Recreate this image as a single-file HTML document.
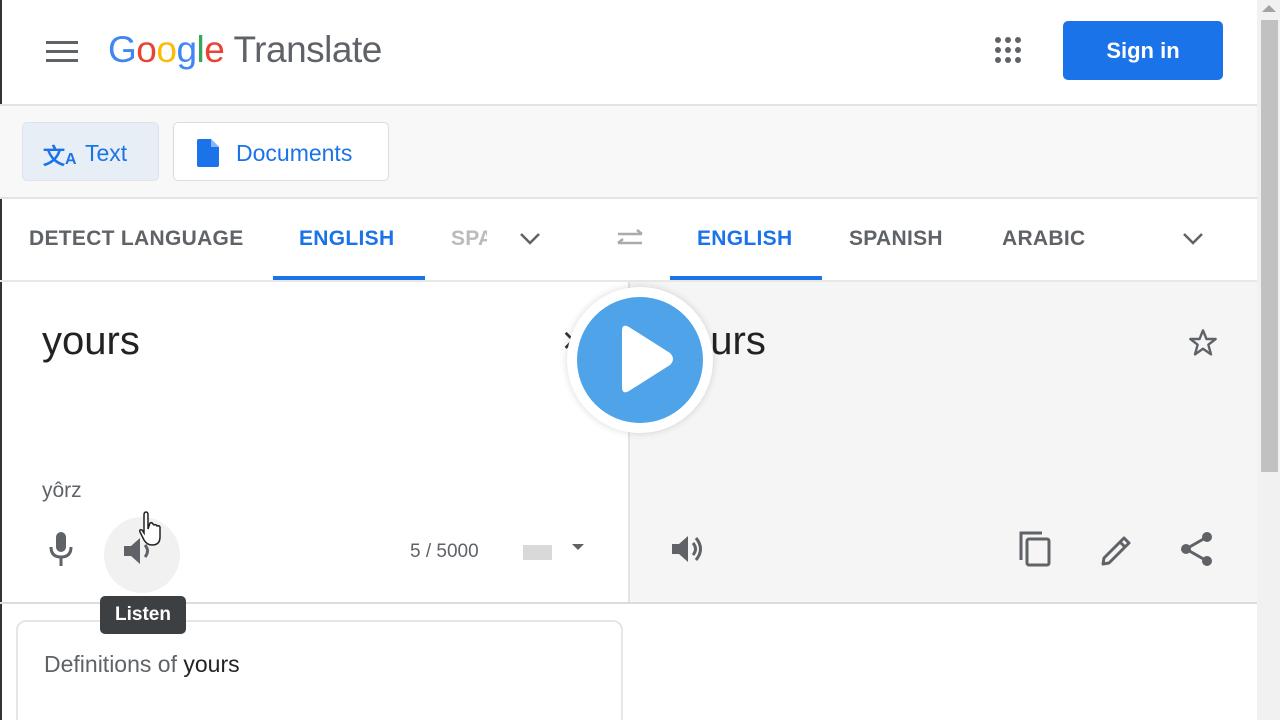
<!DOCTYPE html>
<html><head><meta charset="utf-8"><style>
*{margin:0;padding:0;box-sizing:border-box}
html,body{width:1280px;height:720px;overflow:hidden}
body{background:#fff;font-family:"Liberation Sans",Arial,sans-serif;position:relative}
.a{position:absolute}
.lang{position:absolute;top:227px;font-size:21px;font-weight:bold;color:#5f6368;letter-spacing:0.3px}
.blue{color:#1a73e8}
</style></head><body>
<div class="a" style="left:0;top:0;width:2px;height:720px;background:#333"></div>
<div class="a" style="left:46px;top:41px;width:32px;height:3px;background:#5f6368;box-shadow:0 9px 0 #5f6368,0 18px 0 #5f6368"></div>
<div class="a" style="left:108px;top:29px;font-size:37px;letter-spacing:-0.5px"><span style="color:#4285f4">G</span><span style="color:#ea4335">o</span><span style="color:#fbbc05">o</span><span style="color:#4285f4">g</span><span style="color:#34a853">l</span><span style="color:#ea4335">e</span><span style="color:#5f6368"> Translate</span></div>
<svg class="a" style="left:995px;top:37px" width="28" height="28" viewBox="0 0 28 28" fill="#5f6368"><circle cx="3" cy="3" r="3"/><circle cx="13" cy="3" r="3"/><circle cx="23" cy="3" r="3"/><circle cx="3" cy="13" r="3"/><circle cx="13" cy="13" r="3"/><circle cx="23" cy="13" r="3"/><circle cx="3" cy="23" r="3"/><circle cx="13" cy="23" r="3"/><circle cx="23" cy="23" r="3"/></svg>
<div class="a" style="left:1063px;top:21px;width:160px;height:59px;background:#1a73e8;border-radius:5px;color:#fff;font-size:22px;font-weight:bold;text-align:center;line-height:59px">Sign in</div>
<div class="a" style="left:0;top:104px;width:1257px;height:2px;background:#e3e3e3"></div>
<div class="a" style="left:0;top:106px;width:1257px;height:93px;background:#f8f8f8;border-bottom:2px solid #e3e3e3"></div>
<div class="a" style="left:22px;top:122px;width:137px;height:59px;background:#e8eef6;border:1px solid #dde3ea;border-radius:5px"></div>
<div class="a" style="left:43px;top:139px;font-size:22px;color:#1a73e8;font-weight:bold">文<span style="font-size:16px">A</span></div>
<div class="a" style="left:85px;top:140px;font-size:23px;color:#1a73e8">Text</div>
<div class="a" style="left:173px;top:122px;width:216px;height:59px;background:#fff;border:1px solid #dadce0;border-radius:5px"></div>
<svg class="a" style="left:197px;top:139px" width="22" height="28" viewBox="0 0 22 28"><path d="M2 0H14L22 8V26Q22 28 20 28H2Q0 28 0 26V2Q0 0 2 0Z" fill="#1a73e8"/><path d="M14 0V8H22Z" fill="#8ab4f8"/></svg>
<div class="a" style="left:236px;top:140px;font-size:23px;color:#1a73e8">Documents</div>
<div class="lang" style="left:29px">DETECT LANGUAGE</div>
<div class="lang blue" style="left:299px">ENGLISH</div>
<div class="lang" style="left:451px;color:#bbb;width:36px;overflow:hidden">SPA</div>
<svg class="a" style="left:518px;top:231px" width="24" height="16" viewBox="0 0 24 16"><path d="M3 3L12 12L21 3" fill="none" stroke="#5f6368" stroke-width="2.5"/></svg>
<svg class="a" style="left:614px;top:228px" width="32" height="22" viewBox="0 0 32 22"><path d="M4 15H28M4 15L9 11M28 6H4M28 6L23 2" fill="none" stroke="#aaa" stroke-width="2.5"/></svg>
<div class="lang blue" style="left:697px">ENGLISH</div>
<div class="lang" style="left:849px">SPANISH</div>
<div class="lang" style="left:1002px">ARABIC</div>
<svg class="a" style="left:1181px;top:231px" width="24" height="16" viewBox="0 0 24 16"><path d="M3 3L12 12L21 3" fill="none" stroke="#5f6368" stroke-width="2.5"/></svg>
<div class="a" style="left:273px;top:276px;width:152px;height:4px;background:#1a73e8"></div>
<div class="a" style="left:670px;top:276px;width:152px;height:4px;background:#1a73e8"></div>
<div class="a" style="left:0;top:280px;width:1257px;height:2px;background:#e8e8e8"></div>
<div class="a" style="left:630px;top:282px;width:627px;height:321px;background:#f5f5f5"></div>
<div class="a" style="left:628px;top:282px;width:2px;height:321px;background:#e3e3e3"></div>
<div class="a" style="left:0;top:602px;width:1257px;height:2px;background:#dcdcdc"></div>
<div class="a" style="left:42px;top:319px;font-size:40px;color:#222">yours</div>
<div class="a" style="left:562px;top:320px;font-size:38px;color:#333">×</div>
<div class="a" style="left:668px;top:319px;font-size:40px;color:#222">yours</div>
<div class="a" style="left:42px;top:479px;font-size:21px;color:#5f6368">yôrz</div>
<svg class="a" style="left:1186px;top:327px" width="34" height="32" viewBox="0 0 24 24"><path d="M12 2.5L14.6 9H21.5L16 13.3L18 20.5L12 16.3L6 20.5L8 13.3L2.5 9H9.4Z" fill="none" stroke="#5f6368" stroke-width="1.8" stroke-linejoin="round"/></svg>
<svg class="a" style="left:47px;top:532px" width="28" height="34" viewBox="0 0 28 34" fill="#5f6368"><rect x="9" y="0" width="10" height="20" rx="5"/><path d="M4 15Q4 25 14 25Q24 25 24 15" fill="none" stroke="#5f6368" stroke-width="3"/><rect x="12.5" y="24" width="3" height="10"/></svg>
<div class="a" style="left:104px;top:517px;width:76px;height:76px;border-radius:50%;background:#f1f1f1"></div>
<svg class="a" style="left:124px;top:536px" width="34" height="30" viewBox="0 0 34 30" fill="#5f6368"><path d="M0 10H7L16 2V28L7 20H0Z"/><path d="M21 9Q26 15 21 21" fill="none" stroke="#5f6368" stroke-width="3"/></svg>
<svg class="a" style="left:138px;top:511px" width="28" height="40" viewBox="0 0 28 40"><path d="M6 4Q6 1 8 1Q10 1 10 4V18L12 12Q14 11 15 13L16 14Q18 13 19 15Q21 14 22 16V26Q22 34 14 34Q9 34 6 29L2 21Q1 18 4 19L6 22Z" fill="#fff" stroke="#222" stroke-width="1.5"/></svg>
<div class="a" style="left:410px;top:541px;font-size:19px;color:#5f6368">5 / 5000</div>
<div class="a" style="left:523px;top:545px;width:29px;height:15px;background:#d9d9d9"></div>
<svg class="a" style="left:572px;top:544px" width="12" height="8"><path d="M0 0H12L6 6Z" fill="#5f6368"/></svg>
<svg class="a" style="left:672px;top:534px" width="34" height="30" viewBox="0 0 34 30" fill="#5f6368"><path d="M0 10H7L16 2V28L7 20H0Z"/><path d="M21 9Q26 15 21 21" fill="none" stroke="#5f6368" stroke-width="3"/><path d="M24 4Q33 15 24 26" fill="none" stroke="#5f6368" stroke-width="3"/></svg>
<svg class="a" style="left:1018px;top:530px" width="36" height="38" viewBox="0 0 36 38" fill="none" stroke="#5f6368" stroke-width="3"><path d="M3 30V3H24"/><rect x="9" y="9" width="22" height="26" rx="2"/></svg>
<svg class="a" style="left:1100px;top:533px" width="34" height="34" viewBox="0 0 34 34" fill="none" stroke="#5f6368" stroke-width="3" stroke-linejoin="round"><path d="M3 31L4 25L24 5L29 10L9 30Z"/><path d="M20 9L25 14"/></svg>
<svg class="a" style="left:1180px;top:531px" width="34" height="36" viewBox="0 0 34 36" fill="#5f6368"><circle cx="27" cy="6" r="5"/><circle cx="6" cy="18" r="5"/><circle cx="27" cy="30" r="5"/><path d="M27 6L6 18L27 30" fill="none" stroke="#5f6368" stroke-width="3"/></svg>
<div class="a" style="left:16px;top:620px;width:607px;height:120px;border:2px solid #e6e6e6;border-radius:10px;background:#fff"></div>
<div class="a" style="left:44px;top:651px;font-size:23px;color:#5f6368">Definitions of <span style="color:#222">yours</span></div>
<div class="a" style="left:100px;top:596px;width:86px;height:38px;background:#3c4043;border-radius:5px;color:#fff;font-size:19px;font-weight:bold;text-align:center;line-height:38px">Listen</div>
<div class="a" style="left:567px;top:287px;width:146px;height:146px;border-radius:50%;background:#fff;box-shadow:0 0 8px rgba(0,0,0,0.15)"></div>
<div class="a" style="left:577px;top:297px;width:126px;height:126px;border-radius:50%;background:#4fa3e8"></div>
<svg class="a" style="left:618px;top:323px" width="60" height="72" viewBox="0 0 60 72"><path d="M4 8Q4 0 11 4L52 30Q58 36 52 42L11 68Q4 72 4 64Z" fill="#fff"/></svg>
<div class="a" style="left:1257px;top:0;width:23px;height:720px;background:#f1f1f1"></div>
<div class="a" style="left:1261px;top:20px;width:17px;height:452px;background:#c1c1c1"></div>
<svg class="a" style="left:1262px;top:5px" width="14" height="8"><path d="M0 7L7 0L14 7Z" fill="#a3a3a3"/></svg>
</body></html>
